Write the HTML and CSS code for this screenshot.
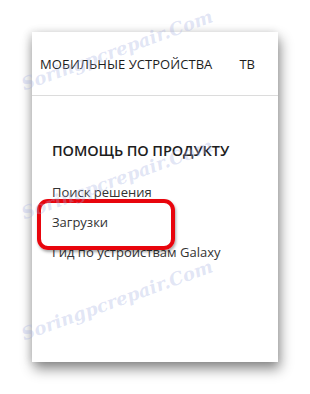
FILE: index.html
```html
<!DOCTYPE html>
<html lang="ru">
<head>
    <meta charset="UTF-8">
    <title>Помощь по продукту</title>
    <link rel="stylesheet" href="styles.css">
</head>
<body>
    <div class="menu">
        <div class="menu-nav">
            <span class="nav-item">МОБИЛЬНЫЕ УСТРОЙСТВА</span>
            <span class="nav-item">ТВ</span>
        </div>
        <div class="menu-section">
            <h2>ПОМОЩЬ ПО ПРОДУКТУ</h2>
            <ul>
                <li>Поиск решения</li>
                <li class="marked">Загрузки</li>
                <li>Гид по устройствам Galaxy</li>
            </ul>
        </div>
    </div>
    <span class="watermark wm-top">Soringpcrepair.Com</span>
    <span class="watermark wm-mid">Soringpcrepair.Com</span>
    <span class="watermark wm-bottom">Soringpcrepair.Com</span>
</body>
</html>
```

FILE: styles.css
```css
* {
    margin: 0;
    padding: 0;
    box-sizing: border-box;
}

body {
    position: relative;
    font-family: 'Open Sans', 'Noto Sans', sans-serif;
    background: #fff;
    padding: 32px;
    color: #1d1d1d;
}

.menu {
    width: 246px;
    height: 330px;
    background: #fff;
    box-shadow: 2px 7px 12px rgba(0,0,0,0.45), -2px 0 8px rgba(0,0,0,0.12);
}

.menu-nav {
    display: flex;
    align-items: center;
    gap: 27px;
    height: 64px;
    padding-left: 8px;
    border-bottom: 1px solid #dcdcdc;
}

.nav-item {
    font-size: 13px;
    font-weight: 500;
    letter-spacing: 0.05px;
    padding-top: 1px;
}

.menu-section {
    padding: 45px 0 0 20px;
}

.menu-section h2 {
    font-size: 14.5px;
    font-weight: 600;
    letter-spacing: -0.1px;
    margin-bottom: 17px;
}

.menu-section ul {
    list-style: none;
}

.menu-section li {
    font-size: 13px;
    line-height: 30px;
    color: #333;
}

.marked {
    position: relative;
}

.marked::after {
    content: '';
    position: absolute;
    left: -15px;
    top: -8px;
    width: 130px;
    height: 43px;
    border: 4px solid #e8050d;
    border-radius: 11px;
    box-shadow: 1px 2px 3px rgba(0,0,0,0.35);
}

.watermark {
    position: absolute;
    left: 22px;
    font-family: 'DejaVu Serif', serif;
    font-style: italic;
    font-weight: bold;
    font-size: 18px;
    color: rgba(165,175,225,0.32);
    transform: rotate(-20deg);
    transform-origin: left center;
    white-space: nowrap;
    pointer-events: none;
}

.wm-top {
    top: 74px;
}

.wm-mid {
    top: 203px;
}

.wm-bottom {
    top: 324px;
}
```
